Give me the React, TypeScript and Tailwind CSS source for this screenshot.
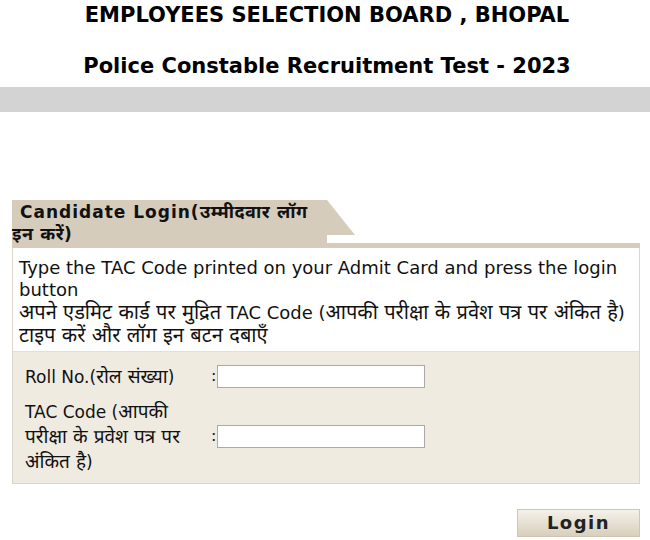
import React from 'react';

const base = "font-['DejaVu_Sans','Noto_Sans_Devanagari','Lohit_Devanagari',sans-serif]";

// Devanagari runs are set a bit larger, like Mangal next to Tahoma
function H({ children, size = 'text-[20px]' }: { children: React.ReactNode; size?: string }) {
  return <span className={size}>{children}</span>;
}

function FormRow({ label, h, lines }: { label: React.ReactNode; h: string; lines?: boolean }) {
  return (
    <div className={`flex items-center ${h}`}>
      <div className={`w-[198px] pl-[12px] pr-[6px] text-[17px] ${lines ? 'leading-[24px]' : 'leading-[22px]'} text-[#111]`}>
        {label}
      </div>
      <span className="w-[6px] text-[16px] text-[#111]">:</span>
      <input
        type="text"
        className="h-[23px] w-[208px] border border-[#a9a9a9] bg-white outline-none"
      />
    </div>
  );
}

export default function App() {
  return (
    <div className={`w-[650px] min-h-[540px] bg-white ${base}`}>
      {/* Header titles */}
      <div className="h-[87px] flex flex-col items-center text-black font-bold text-[21px] leading-[24px]">
        <h1 className="mt-[3px] ml-[4px]">EMPLOYEES SELECTION BOARD , BHOPAL</h1>
        <h2 className="mt-[27px] ml-[4px]">Police Constable Recruitment Test - 2023</h2>
      </div>
      <div className="h-[25px] bg-[#d3d3d3]" />

      <div className="h-[88px]" />

      {/* Tab header */}
      <div className="ml-[12px] w-[628px]">
        <div className="flex h-[43px]">
          <div className="w-[315px] bg-[#d5ccbc] pt-[1px] text-[17px] leading-[22px] font-bold tracking-[1px] text-[#111] indent-[8px]">
            Candidate Login(<H size="text-[18px] tracking-[0.5px]">उम्मीदवार लॉग इन करें</H>)
          </div>
          <svg width="28" height="35" viewBox="0 0 28 35" className="block">
            <polygon points="0,0 28,35 0,35" fill="#d5ccbc" />
          </svg>
        </div>
        <div className="h-[5px] bg-[#d5ccbc]" />

        {/* Box */}
        <div className="border-x border-b border-[#dbd6ca]">
          <div className="h-[104px] bg-white px-[6px] pt-[9px] text-[18px] leading-[22px] text-[#111] border-b border-[#e4e0d6]">
            <p>Type the TAC Code printed on your Admit Card and press the login button</p>
            <p>
              <H>अपने एडमिट कार्ड पर मुद्रित</H> TAC Code (<H>आपकी परीक्षा के प्रवेश पत्र पर अंकित है</H>){' '}
              <H>टाइप करें और लॉग इन बटन दबाएँ</H>
            </p>
          </div>
          <div className="bg-[#efebe1] pb-[11px]">
            <FormRow h="h-[48px]" label={<>Roll No.(<H size="text-[19px]">रोल संख्या</H>)</>} />
            <FormRow
              h="h-[72px]"
              lines
              label={<>TAC Code (<H size="text-[19px]">आपकी परीक्षा के प्रवेश पत्र पर अंकित है</H>)</>}
            />
          </div>
        </div>
      </div>

      {/* Login button */}
      <div className="flex justify-end pr-[10px] pt-[25px]">
        <button className="w-[123px] h-[28px] border border-[#cfc6b3] bg-gradient-to-b from-[#f5f2ea] to-[#d8cfbc] text-[18px] leading-[26px] font-bold tracking-[1.5px] text-[#222]">
          Login
        </button>
      </div>
    </div>
  );
}
